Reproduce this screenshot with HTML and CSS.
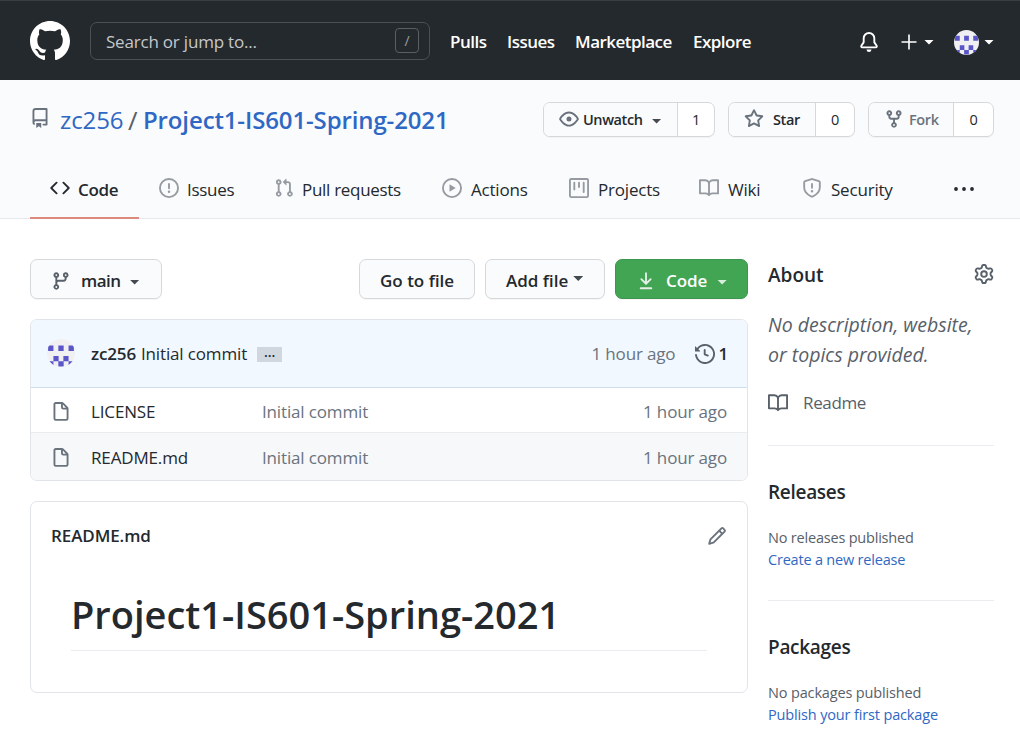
FILE: index.html
```html
<!DOCTYPE html>
<html lang="en">
<head>
<meta charset="utf-8">
<title>zc256/Project1-IS601-Spring-2021</title>
<link rel="stylesheet" href="styles.css">
</head>
<body>
<svg class="defs" width="0" height="0" aria-hidden="true">
  <symbol id="file" viewBox="0 0 16 16"><path fill-rule="evenodd" d="M3.75 1.5a.25.25 0 00-.25.25v11.5c0 .138.112.25.25.25h8.5a.25.25 0 00.25-.25V6H9.75A1.75 1.75 0 018 4.25V1.5H3.75zm5.75.56v2.19c0 .138.112.25.25.25h2.19L9.5 2.06zM2 1.75C2 .784 2.784 0 3.75 0h5.086c.464 0 .909.184 1.237.513l3.414 3.414c.329.328.513.773.513 1.237v8.086A1.75 1.75 0 0112.25 15h-8.5A1.75 1.75 0 012 13.25V1.75z"/></symbol>
  <symbol id="book" viewBox="0 0 16 16"><path fill-rule="evenodd" d="M0 1.75A.75.75 0 01.75 1h4.253c1.227 0 2.317.59 3 1.501A3.744 3.744 0 0111.006 1h4.245a.75.75 0 01.75.75v10.5a.75.75 0 01-.75.75h-4.507a2.25 2.25 0 00-1.591.659l-.622.621a.75.75 0 01-1.06 0l-.622-.621A2.25 2.25 0 005.258 13H.75a.75.75 0 01-.75-.75V1.75zm8.755 3a2.25 2.25 0 012.25-2.25H14.5v9h-3.757c-.71 0-1.4.201-1.992.572l.004-7.322zm-1.504 7.324l.004-5.073-.002-2.253A2.25 2.25 0 005.003 2.5H1.5v9h3.757a3.75 3.75 0 011.994.574z"/></symbol>
  <symbol id="identicon" viewBox="0 0 20 20"><circle cx="10" cy="10" r="10" fill="#f0f0f2"/><clipPath id="round"><circle cx="10" cy="10" r="10"/></clipPath><path clip-path="url(#round)" fill="#5a55c8" d="M.8 4.600h3.800v4H.8zM8.100 4.600h3.800v4H8.100zM15.400 4.600h3.800v4h-3.800zM4.600 12.200h3.700v3.700H4.600zM11.700 12.200h3.700v3.700h-3.700zM.8 15.900h3.800v3.700H.8zM8.100 15.900h3.800v3.700H8.100zM15.400 15.900h3.800v3.700h-3.800z"/></symbol>
</svg>

<header class="header">
  <svg class="logo" viewBox="0 0 16 16"><path fill-rule="evenodd" d="M8 0C3.580 0 0 3.580 0 8c0 3.540 2.290 6.530 5.470 7.590.4.070.550-.170.550-.380 0-.190-.010-.820-.010-1.490-2.010.370-2.530-.490-2.690-.940-.090-.230-.480-.940-.820-1.130-.280-.150-.680-.520-.010-.530.630-.010 1.080.580 1.230.820.720 1.210 1.870.870 2.330.660.070-.520.280-.870.510-1.070-1.780-.2-3.640-.890-3.640-3.950 0-.870.310-1.590.820-2.150-.080-.2-.360-1.020.080-2.120 0 0 .670-.210 2.200.820.640-.180 1.320-.270 2-.270.680 0 1.360.090 2 .270 1.530-1.040 2.200-.820 2.200-.820.440 1.100.160 1.920.080 2.120.510.560.820 1.270.820 2.150 0 3.070-1.870 3.750-3.650 3.950.290.250.540.730.540 1.480 0 1.070-.010 1.930-.010 2.200 0 .210.150.460.550.380A8.013 8.013 0 0016 8c0-4.420-3.580-8-8-8z"/></svg>
  <div class="search"><span class="placeholder">Search or jump to...</span><kbd class="slash">/</kbd></div>
  <nav class="topnav"><a class="pulls">Pulls</a><a class="iss">Issues</a><a class="market">Marketplace</a><a>Explore</a></nav>
  <div class="usernav">
    <svg class="bell" viewBox="0 0 16 16"><path d="M8 16a2 2 0 001.985-1.750c.017-.137-.097-.250-.235-.250h-3.500c-.138 0-.252.113-.235.250A2 2 0 008 16z"/><path fill-rule="evenodd" d="M8 1.500A3.500 3.500 0 004.500 5v2.947c0 .346-.102.683-.294.970l-1.703 2.556a.018.018 0 00-.003.010l.001.006c0 .002.002.004.004.006a.017.017 0 00.006.004l.007.001h10.964l.007-.001a.016.016 0 00.006-.004.016.016 0 00.004-.006l.001-.007a.017.017 0 00-.003-.010l-1.703-2.554a1.750 1.750 0 01-.294-.970V5A3.500 3.500 0 008 1.500zM3 5a5 5 0 0110 0v2.947c0 .050.015.098.042.139l1.703 2.555A1.518 1.518 0 0113.482 13H2.518a1.518 1.518 0 01-1.263-2.360l1.703-2.554A.250.250 0 003 7.947V5z"/></svg>
    <svg class="plus" viewBox="0 0 16 16"><path d="M7.350 2h1.300v5.350H14v1.300H8.650V14h-1.300V8.650H2v-1.300h5.350z"/></svg>
    <i class="caret"></i>
    <svg class="avatar-sm" viewBox="0 0 20 20"><use href="#identicon"/></svg>
    <i class="caret"></i>
  </div>
</header>

<section class="repohead">
  <div class="titlebar">
    <svg class="repo-icon" viewBox="0 0 16 16"><path fill-rule="evenodd" d="M2 2.500A2.500 2.500 0 014.500 0h8.750a.750.750 0 01.750.750v12.500a.750.750 0 01-.750.750h-2.500a.750.750 0 110-1.500h1.750v-2h-8a1 1 0 00-.714 1.700.750.750 0 01-1.072 1.050A2.495 2.495 0 012 11.500v-9zm10.500-1V9h-8c-.356 0-.694.074-1 .208V2.500a1 1 0 011-1h8zM5 12.250v3.250a.250.250 0 00.400.200l1.450-1.087a.250.250 0 01.300 0L8.600 15.700a.250.250 0 00.400-.200v-3.250a.250.250 0 00-.250-.250h-3.500a.250.250 0 00-.250.250z"/></svg>
    <h1 class="reponame"><a class="owner">zc256</a><span class="sep">/</span><a class="name">Project1-IS601-Spring-2021</a></h1>
    <div class="actions">
      <div class="group g-watch"><span class="act">
        <svg class="eye" viewBox="0 0 16 16"><path fill-rule="evenodd" d="M1.679 7.932c.412-.621 1.242-1.750 2.366-2.717C5.175 4.242 6.527 3.500 8 3.500c1.473 0 2.824.742 3.955 1.715 1.124.967 1.954 2.096 2.366 2.717a.119.119 0 010 .136c-.412.621-1.242 1.750-2.366 2.717C10.825 11.758 9.473 12.500 8 12.500c-1.473 0-2.824-.742-3.955-1.715C2.920 9.818 2.090 8.690 1.679 8.068a.119.119 0 010-.136zM8 2c-1.981 0-3.670.992-4.933 2.078C1.797 5.169.880 6.423.430 7.100a1.619 1.619 0 000 1.798c.450.678 1.367 1.932 2.637 3.024C4.329 13.008 6.019 14 8 14c1.981 0 3.670-.992 4.933-2.078 1.270-1.091 2.187-2.345 2.637-3.023a1.619 1.619 0 000-1.798c-.450-.678-1.367-1.932-2.637-3.023C11.671 2.992 9.981 2 8 2zm0 8a2 2 0 100-4 2 2 0 000 4z"/></svg><span>Unwatch</span><i class="caret dark"></i></span><span class="count">1</span></div>
      <div class="group g-star"><span class="act">
        <svg viewBox="0 0 16 16"><path fill-rule="evenodd" d="M8 .250a.750.750 0 01.673.418l1.882 3.815 4.210.612a.750.750 0 01.416 1.279l-3.046 2.970.719 4.192a.750.750 0 01-1.088.791L8 12.347l-3.766 1.980a.750.750 0 01-1.088-.790l.720-4.194L.818 6.374a.750.750 0 01.416-1.280l4.210-.611L7.327.668A.750.750 0 018 .250zm0 2.445L6.615 5.500a.750.750 0 01-.564.410l-3.097.450 2.240 2.184a.750.750 0 01.216.664l-.528 3.084 2.769-1.456a.750.750 0 01.698 0l2.770 1.456-.530-3.084a.750.750 0 01.216-.664l2.240-2.183-3.096-.450a.750.750 0 01-.564-.410L8 2.694v.001z"/></svg><span>Star</span></span><span class="count">0</span></div>
      <div class="group g-fork"><span class="act">
        <svg viewBox="0 0 16 16"><path fill-rule="evenodd" d="M5 3.250a.750.750 0 11-1.500 0 .750.750 0 011.500 0zm0 2.122a2.250 2.250 0 10-1.500 0v.878A2.250 2.250 0 005.750 8.500h1.500v2.128a2.251 2.251 0 101.500 0V8.500h1.500a2.250 2.250 0 002.250-2.250v-.878a2.250 2.250 0 10-1.500 0v.878a.750.750 0 01-.750.750h-4.500A.750.750 0 015 6.250v-.878zm3.750 7.378a.750.750 0 11-1.500 0 .750.750 0 011.500 0zm3-8.750a.750.750 0 100-1.500.750.750 0 000 1.500z"/></svg><span>Fork</span></span><span class="count">0</span></div>
    </div>
  </div>
  <nav class="tabs">
    <a class="tab active"><svg viewBox="0 0 16 16"><path fill-rule="evenodd" d="M4.720 3.220a.750.750 0 011.060 1.060L2.060 8l3.720 3.720a.750.750 0 11-1.060 1.060L.470 8.530a.750.750 0 010-1.060l4.250-4.250zm6.560 0a.750.750 0 10-1.060 1.060L13.940 8l-3.720 3.720a.750.750 0 101.060 1.060l4.250-4.250a.750.750 0 000-1.060l-4.250-4.250z"/></svg><span>Code</span></a>
    <a class="tab"><svg viewBox="0 0 16 16"><path fill-rule="evenodd" d="M8 1.500a6.500 6.500 0 100 13 6.500 6.500 0 000-13zM0 8a8 8 0 1116 0A8 8 0 010 8zm9 3a1 1 0 11-2 0 1 1 0 012 0zm-.250-6.250a.750.750 0 00-1.500 0v3.500a.750.750 0 001.500 0v-3.500z"/></svg><span>Issues</span></a>
    <a class="tab pr"><svg viewBox="0 0 16 16"><path fill-rule="evenodd" d="M7.177 3.073L9.573.677A.250.250 0 0110 .854v4.792a.250.250 0 01-.427.177L7.177 3.427a.250.250 0 010-.354zM3.750 2.500a.750.750 0 100 1.500.750.750 0 000-1.500zm-2.250.750a2.250 2.250 0 113 2.122v5.256a2.251 2.251 0 11-1.500 0V5.372A2.250 2.250 0 011.500 3.250zM11 2.500h-1V4h1a1 1 0 011 1v5.628a2.251 2.251 0 101.500 0V5A2.500 2.500 0 0011 2.500zm1 10.250a.750.750 0 111.500 0 .750.750 0 01-1.500 0zM3.750 12a.750.750 0 100 1.500.750.750 0 000-1.500z"/></svg><span>Pull requests</span></a>
    <a class="tab"><svg viewBox="0 0 16 16"><path fill-rule="evenodd" d="M1.500 8a6.500 6.500 0 1113 0 6.500 6.500 0 01-13 0zM8 0a8 8 0 100 16A8 8 0 008 0zM6.379 5.227A.250.250 0 006 5.442v5.117a.250.250 0 00.379.214l4.264-2.559a.250.250 0 000-.428L6.379 5.227z"/></svg><span>Actions</span></a>
    <a class="tab"><svg viewBox="0 0 16 16"><path fill-rule="evenodd" d="M1.750 0A1.750 1.750 0 000 1.750v12.500C0 15.216.784 16 1.750 16h12.500A1.750 1.750 0 0016 14.250V1.750A1.750 1.750 0 0014.250 0H1.750zM1.500 1.750a.250.250 0 01.250-.250h12.500a.250.250 0 01.250.250v12.500a.250.250 0 01-.250.250H1.750a.250.250 0 01-.250-.250V1.750zM11.750 3a.750.750 0 00-.750.750v7.500a.750.750 0 001.500 0v-7.500a.750.750 0 00-.750-.750zm-8.250.750a.750.750 0 011.500 0v5.500a.750.750 0 01-1.500 0v-5.500zM8 3a.750.750 0 00-.750.750v3.500a.750.750 0 001.500 0v-3.500A.750.750 0 008 3z"/></svg><span>Projects</span></a>
    <a class="tab"><svg><use href="#book"/></svg><span>Wiki</span></a>
    <a class="tab"><svg viewBox="0 0 16 16"><path fill-rule="evenodd" d="M7.467.133a1.750 1.750 0 011.066 0l5.250 1.680A1.750 1.750 0 0115 3.480V7c0 1.566-.320 3.182-1.303 4.682-.983 1.498-2.585 2.813-5.032 3.855a1.700 1.700 0 01-1.330 0c-2.447-1.042-4.049-2.357-5.032-3.855C1.320 10.182 1 8.566 1 7V3.480a1.750 1.750 0 011.217-1.667l5.250-1.680zm.610 1.429a.250.250 0 00-.153 0l-5.250 1.680a.250.250 0 00-.174.238V7c0 1.358.275 2.666 1.057 3.860.784 1.194 2.121 2.340 4.366 3.297a.200.200 0 00.154 0c2.245-.956 3.582-2.104 4.366-3.298C13.225 9.666 13.500 8.360 13.500 7V3.480a.250.250 0 00-.174-.237l-5.250-1.680zM9 10.500a1 1 0 11-2 0 1 1 0 012 0zm-.250-5.750a.750.750 0 10-1.500 0v3a.750.750 0 001.500 0v-3z"/></svg><span>Security</span></a>
    <svg class="more" viewBox="0 0 20 4"><circle cx="2" cy="2" r="1.900"/><circle cx="10" cy="2" r="1.900"/><circle cx="18" cy="2" r="1.900"/></svg>
  </nav>
</section>

<main class="layout">
  <div class="content">
    <div class="toolbar">
      <a class="btn branch"><svg viewBox="0 0 16 16"><path fill-rule="evenodd" d="M11.750 2.500a.750.750 0 100 1.500.750.750 0 000-1.500zm-2.250.750a2.250 2.250 0 113 2.122V6A2.500 2.500 0 0110 8.500H6a1 1 0 00-1 1v1.128a2.251 2.251 0 11-1.500 0V5.372a2.250 2.250 0 111.500 0v1.836A2.492 2.492 0 016 7h4a1 1 0 001-1v-.628A2.250 2.250 0 019.500 3.250zM4.250 12a.750.750 0 100 1.500.750.750 0 000-1.500zM3.500 3.250a.750.750 0 111.500 0 .750.750 0 01-1.500 0z"/></svg><span>main</span><i class="caret dark"></i></a>
      <a class="btn goto"><span>Go to file</span></a>
      <a class="btn add"><span>Add file</span><i class="caret dark"></i></a>
      <a class="btn green"><svg viewBox="0 0 16 16"><path fill-rule="evenodd" d="M7.470 10.780a.750.750 0 001.060 0l3.750-3.750a.750.750 0 00-1.060-1.060L8.750 8.440V1.750a.750.750 0 00-1.500 0v6.690L4.780 5.970a.750.750 0 00-1.060 1.060l3.750 3.750zM3.750 13a.750.750 0 000 1.500h8.500a.750.750 0 000-1.500h-8.500z"/></svg><span>Code</span><i class="caret"></i></a>
    </div>

    <div class="box files">
      <div class="commit">
        <svg class="avatar" viewBox="0 0 20 20"><use href="#identicon"/></svg>
        <b>zc256</b><span class="msg">Initial commit</span><span class="ellipsis">...</span>
        <span class="when">1 hour ago</span>
        <svg class="history" viewBox="0 0 16 16"><path fill-rule="evenodd" d="M1.643 3.143L.427 1.927A.250.250 0 000 2.104V5.750c0 .138.112.250.250.250h3.646a.250.250 0 00.177-.427L2.715 4.215a6.500 6.500 0 11-1.180 4.458.750.750 0 10-1.493.154 8.001 8.001 0 101.600-5.684zM7.750 4a.750.750 0 01.750.750v2.992l2.028.812a.750.750 0 01-.557 1.392l-2.500-1A.750.750 0 017 8.250v-3.500A.750.750 0 017.750 4z"/></svg><strong>1</strong>
      </div>
      <div class="row"><svg><use href="#file"/></svg><span class="fname lic">LICENSE</span><span class="fmsg">Initial commit</span><span class="when">1 hour ago</span></div>
      <div class="row alt"><svg><use href="#file"/></svg><span class="fname">README.md</span><span class="fmsg">Initial commit</span><span class="when">1 hour ago</span></div>
    </div>

    <article class="box readme">
      <div class="readme-head"><span>README.md</span><svg viewBox="0 0 16 16"><path fill-rule="evenodd" d="M11.013 1.427a1.750 1.750 0 012.474 0l1.086 1.086a1.750 1.750 0 010 2.474l-8.610 8.610c-.210.210-.470.364-.756.445l-3.251.930a.750.750 0 01-.927-.928l.929-3.250a1.750 1.750 0 01.445-.758l8.610-8.610zm1.414 1.060a.250.250 0 00-.354 0L10.811 3.750l1.439 1.440 1.263-1.263a.250.250 0 000-.354l-1.086-1.086zM11.189 6.250L9.750 4.810l-6.286 6.287a.250.250 0 00-.064.108l-.558 1.953 1.953-.558a.249.249 0 00.108-.064l6.286-6.286z"/></svg></div>
      <h2><span>Project1-IS601-Spring-2021</span></h2>
    </article>
  </div>

  <aside class="sidebar">
    <section class="about">
      <div class="about-head"><h3>About</h3>
        <svg viewBox="0 0 16 16"><path fill-rule="evenodd" d="M7.429 1.525a6.593 6.593 0 011.142 0c.036.003.108.036.137.146l.289 1.105c.147.560.550.967.997 1.189.174.086.341.183.501.290.417.278.970.423 1.530.270l1.102-.303c.110-.030.175.016.195.046.219.310.410.641.573.989.014.031.022.110-.059.190l-.815.806c-.411.406-.562.957-.530 1.456a4.588 4.588 0 010 .582c-.032.499.119 1.050.530 1.456l.815.806c.080.080.073.159.059.190a6.494 6.494 0 01-.573.990c-.020.029-.086.074-.195.045l-1.103-.303c-.559-.153-1.112-.008-1.529.270-.160.107-.327.204-.500.290-.449.222-.851.628-.998 1.189l-.289 1.105c-.029.110-.101.143-.137.146a6.613 6.613 0 01-1.142 0c-.036-.003-.108-.037-.137-.146l-.289-1.105c-.147-.560-.550-.967-.997-1.189a4.502 4.502 0 01-.501-.290c-.417-.278-.970-.423-1.530-.270l-1.102.303c-.110.030-.175-.016-.195-.046a6.492 6.492 0 01-.573-.989c-.014-.031-.022-.110.059-.190l.815-.806c.411-.406.562-.957.530-1.456a4.587 4.587 0 010-.582c.032-.499-.119-1.050-.530-1.456l-.815-.806c-.080-.080-.073-.159-.059-.190a6.440 6.440 0 01.573-.990c.020-.029.086-.075.195-.045l1.103.303c.559.153 1.112.008 1.529-.270.160-.107.327-.204.500-.290.449-.222.851-.628.998-1.189l.289-1.105c.029-.110.101-.143.137-.146zM8 0c-.236 0-.470.010-.701.030-.743.065-1.290.615-1.458 1.261l-.290 1.106c-.017.066-.078.158-.211.224a5.994 5.994 0 00-.668.386c-.123.082-.233.090-.300.071L3.270 2.776c-.644-.177-1.392.020-1.820.630a7.977 7.977 0 00-.704 1.217c-.315.675-.111 1.422.363 1.891l.815.806c.050.048.098.147.088.294a6.084 6.084 0 000 .772c.010.147-.038.246-.088.294l-.815.806c-.474.469-.678 1.216-.363 1.891.200.428.436.835.704 1.218.428.609 1.176.806 1.820.630l1.103-.303c.066-.019.176-.011.299.071.213.143.436.272.668.386.133.066.194.158.212.224l.289 1.106c.169.646.715 1.196 1.458 1.260a8.094 8.094 0 001.402 0c.743-.064 1.290-.614 1.458-1.260l.290-1.106c.017-.066.078-.158.211-.224a5.980 5.980 0 00.668-.386c.123-.082.233-.090.300-.071l1.102.302c.644.177 1.392-.020 1.820-.630.268-.382.505-.789.704-1.217.315-.675.111-1.422-.364-1.891l-.814-.806c-.050-.048-.098-.147-.088-.294a6.100 6.100 0 000-.772c-.010-.147.039-.246.088-.294l.814-.806c.475-.469.679-1.216.364-1.891a7.992 7.992 0 00-.704-1.218c-.428-.609-1.176-.806-1.820-.630l-1.103.303c-.066.019-.176.011-.299-.071a5.991 5.991 0 00-.668-.386c-.133-.066-.194-.158-.212-.224L10.160 1.290C9.990.645 9.444.095 8.701.031A8.094 8.094 0 008 0zm1.500 8a1.500 1.500 0 11-3 0 1.500 1.500 0 013 0zM11 8a3 3 0 11-6 0 3 3 0 016 0z"/></svg></div>
      <p class="desc">No description, website,<br>or topics provided.</p>
      <div class="readme-link"><svg><use href="#book"/></svg><span>Readme</span></div>
    </section>
    <section class="releases"><h3>Releases</h3><p class="r1">No releases published</p><a class="r2">Create a new release</a></section>
    <section class="packages"><h3>Packages</h3><p class="p1">No packages published</p><a class="p2">Publish your first package</a></section>
  </aside>
</main>
</body>
</html>
```
FILE: styles.css
```css
* { box-sizing: border-box; }
body {
  margin: 0;
  width: 1020px;
  height: 756px;
  overflow: hidden;
  background: #fff;
  color: #24292e;
  font-family: "Open Sans", "Noto Sans", sans-serif;
  font-size: 17px;
  line-height: 24px;
  white-space: nowrap;
}
svg { display: block; flex: none; width: 20px; height: 20px; fill: currentColor; }
.defs { position: absolute; width: 0; height: 0; }
h1, h2, h3, p { margin: 0; font-weight: 400; }
.caret {
  flex: none;
  width: 10px;
  height: 5px;
  margin-top: 1px;
  background: #fff;
  clip-path: polygon(0 0, 100% 0, 50% 100%);
}
.caret.dark { background: #444a50; }

/* Global header */
.header {
  display: flex;
  align-items: center;
  height: 80px;
  padding: 2px 26px 0 30px;
  border-top: 1px solid #3a3d41;
  background: #24292e;
  color: #fff;
}
.logo { width: 40px; height: 40px; margin-bottom: 2px; }
.search {
  display: flex;
  align-items: center;
  width: 340px;
  height: 38px;
  margin: 0 0 2px 20px;
  padding: 0 10px 0 15px;
  border: 1px solid #4b5056;
  border-radius: 7px;
  color: #c5c8cb;
}
.slash {
  width: 24px;
  height: 25px;
  margin-left: auto;
  border: 1px solid #5a5f65;
  border-radius: 4px;
  color: #9a9ea3;
  font: 14px/23px "Open Sans", sans-serif;
  text-align: center;
}
.placeholder { margin-top: 2px; letter-spacing: -.2px; }
.topnav {
  display: grid;
  grid-template-columns: 57px 68px 118px 70px;
  margin-left: 20px;
  font-weight: 600;
  letter-spacing: -.52px;
}
.usernav { display: flex; align-items: center; margin-left: auto; }
.bell { margin-right: 20px; }
.plus { margin-right: 5px; }
.avatar-sm { width: 25px; height: 25px; margin: 1px 5px 0 20px; }

/* Repository heading */
.repohead { height: 139px; border-bottom: 1px solid #e6e9ec; background: #fafbfc; }
.titlebar { display: flex; align-items: center; height: 79px; padding: 0 26px 0 30px; }
.repo-icon { color: #6a737d; margin-bottom: 4px; }
.reponame { display: flex; margin-left: 10px; font-size: 24px; line-height: 32px; color: #2f68c4; }
.owner { width: 68px; letter-spacing: -.1px; }
.sep { width: 15px; font-size: 26px; color: #586069; }
.name { font-weight: 600; letter-spacing: -.13px; }
.actions { display: flex; gap: 13px; margin-left: auto; font-size: 14.500px; font-weight: 600; letter-spacing: -.4px; }
.group {
  display: flex;
  height: 35px;
  border: 1px solid #d6d9dc;
  border-radius: 7px;
  background: #fff;
  box-shadow: 0 1px 0 rgba(27, 31, 35, .04);
  overflow: hidden;
}
.act { display: flex; align-items: center; flex: 1; border-right: 1px solid #d6d9dc; background: #fafbfc; padding-left: 15px; }
.act svg { color: #6a737d; margin-bottom: 1px; }
.act .caret { margin-top: 3px; }
.count { width: 36px; font-weight: 500; line-height: 33px; text-align: center; }
.g-watch { width: 172px; }
.g-watch .act span { margin: 0 9px 0 4px; }
.g-star { width: 127px; }
.g-star .act span { margin-left: 9px; }
.g-star .count { width: 38px; }
.g-fork .count { width: 39px; }
.g-fork { width: 126px; }
.g-fork .act span { margin-left: 5px; color: #6a737d; }

/* Repository tabs */
.tabs {
  display: grid;
  grid-template-columns: 109px 115px 168px 127px 130px 103px 172px 20px;
  height: 60px;
  padding-left: 30px;
  letter-spacing: -.3px;
}
.tab { display: flex; align-items: center; padding-left: 20px; padding-bottom: 2px; }
.tab svg { color: #969ba1; }
.tab span { margin: 3px 0 0 8px; }
.tab:nth-child(n+4) span { margin-left: 9px; letter-spacing: -.2px; }
.active { border-bottom: 2px solid #dc8a7c; padding-bottom: 0; font-weight: 600; }
.tab.active svg { color: #24292e; }
.more { width: 20px; height: 4px; margin-top: 28px; }

/* Page body */
.layout { display: grid; grid-template-columns: 718px 226px; gap: 20px; padding: 40px 0 0 30px; }
.toolbar { display: flex; gap: 10px; height: 40px; }
.btn {
  display: flex;
  align-items: center;
  padding: 3px 20px 0;
  border: 1px solid #d6d9dc;
  border-radius: 7px;
  background: #fafbfc;
  box-shadow: 0 1px 0 rgba(27, 31, 35, .04);
  font-weight: 600;
  letter-spacing: -.5px;
}
.branch { width: 132px; margin-right: auto; }
.branch svg { color: #586069; }
.branch span { margin: 0 9px 0 10px; }
.goto { width: 116px; letter-spacing: 0; }
.add { width: 120px; letter-spacing: 0; }
.add .caret { margin: 0 0 4px 5px; }
.green { width: 133px; border-color: #3c9650; background: #42a553; color: #fff; letter-spacing: -.1px; }
.green svg { opacity: .85; }
.green span { margin: 0 10px; }
.green .caret { margin-top: 3px; opacity: .8; }
.branch .caret { margin-top: 3px; }

.box { border: 1px solid #e1e4e8; border-radius: 7px; overflow: hidden; }
.files { height: 162px; margin-top: 20px; letter-spacing: -.15px; }
.commit {
  display: flex;
  align-items: center;
  height: 68px;
  padding: 0 19px 0 16px;
  border-bottom: 1px solid #cfdeed;
  background: #f1f8ff;
}
.avatar { width: 28px; height: 28px; margin-bottom: 2px; }
.commit b { margin-left: 16px; font-weight: 600; }
.msg { margin-left: 5px; }
.ellipsis {
  width: 25px;
  height: 15px;
  margin: 2px 0 0 10px;
  background: #d0d7df;
  font-size: 14px;
  font-weight: 600;
  line-height: 10px;
  text-align: center;
}
.when { margin-left: auto; color: #6a737d; }
.history { margin: 0 3px 0 20px; color: #586069; }
.commit strong { font-weight: 600; }
.row { display: flex; align-items: center; height: 45px; padding: 3px 20px 0; border-bottom: 1px solid #eaecef; }
.row svg { color: #6a737d; }
.fname { width: 171px; margin-left: 20px; }
.fmsg { color: #6a737d; }
.row.alt { height: 47px; padding-top: 2px; border: 0; background: #f6f8fa; }

.readme { height: 192px; margin-top: 20px; }
.readme-head { display: flex; justify-content: space-between; align-items: center; height: 68px; padding: 0 20px; font-weight: 600; letter-spacing: -.1px; }
.readme-head svg { color: #6a737d; }
.readme h2 {
  height: 81px;
  margin: 0 40px;
  border-bottom: 1px solid #eaecef;
  font-size: 38px;
  font-weight: 600;
  line-height: 88px;
  letter-spacing: 0;
}

/* Sidebar */
.sidebar { color: #586069; font-size: 14.500px; line-height: 22px; letter-spacing: -.2px; }
.sidebar h3 { color: #24292e; font-size: 19px; font-weight: 600; line-height: 30px; letter-spacing: -.3px; }
.about { height: 187px; border-bottom: 1px solid #eaecef; }
.about-head { display: flex; justify-content: space-between; align-items: center; height: 30px; }
.about-head h3 { margin-top: 2px; letter-spacing: 0; }
.desc { margin-top: 21px; font-size: 19.500px; font-style: italic; line-height: 30px; letter-spacing: 0; }
.readme-link { display: flex; align-items: center; gap: 15px; margin-top: 22px; font-size: 17px; line-height: 22px; letter-spacing: -.35px; }
.releases { height: 155px; padding-top: 31px; border-bottom: 1px solid #eaecef; }
.packages { padding-top: 31px; }
.releases p, .packages p { margin-top: 20px; }
.releases a, .packages a { display: block; color: #2f68c4; }
.packages p, .packages a { letter-spacing: -.15px; }
```
